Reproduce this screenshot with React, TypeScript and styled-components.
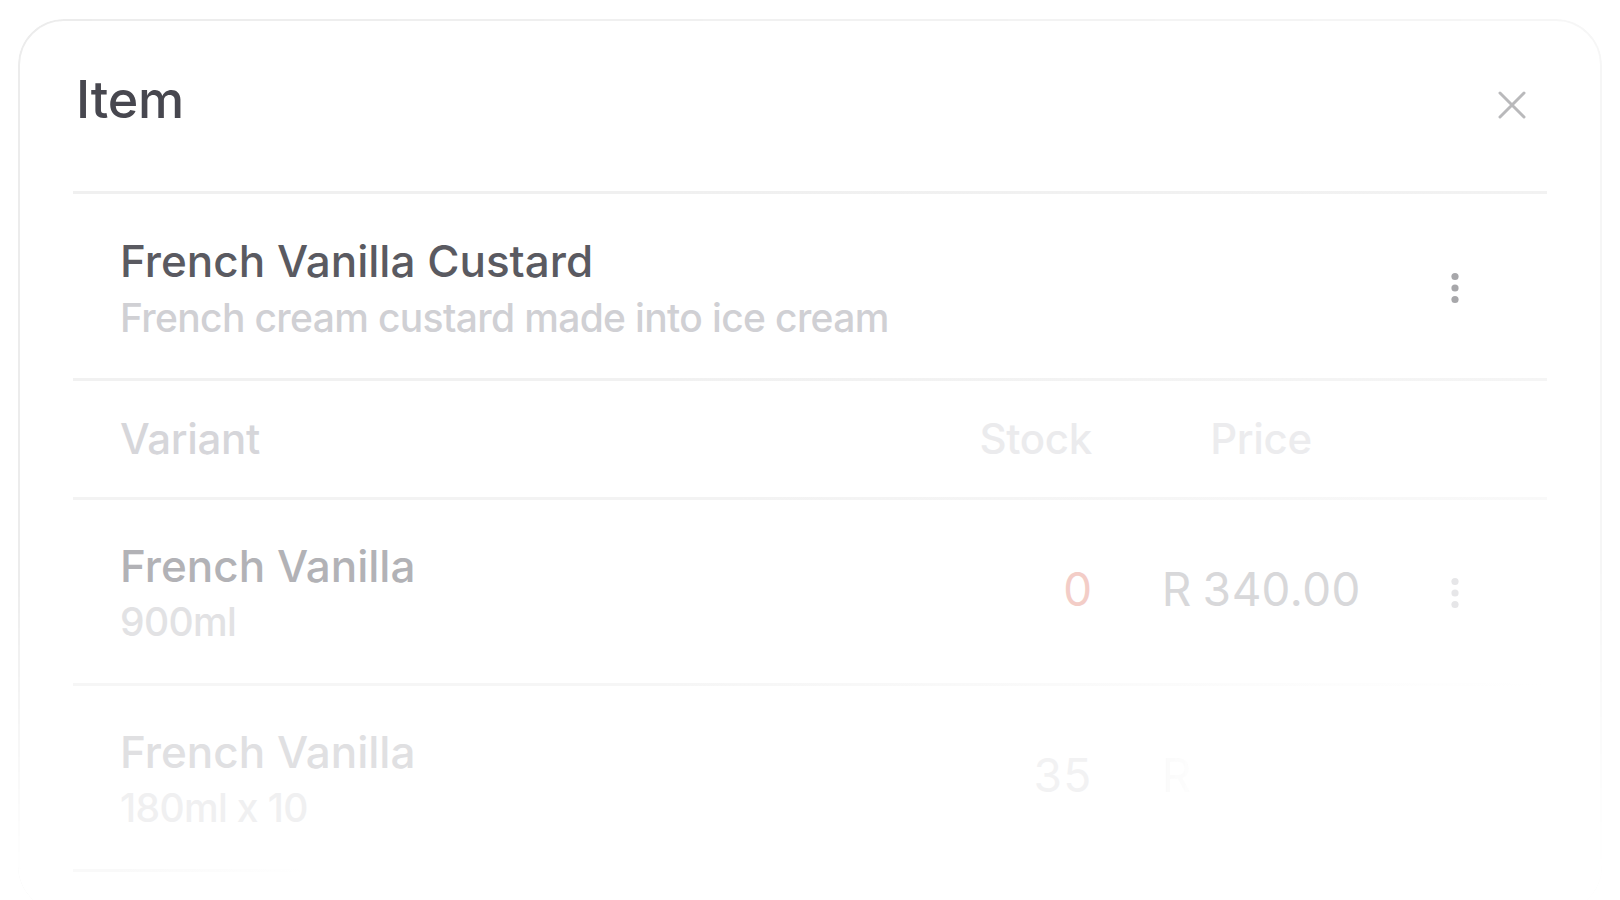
import React from "react";
import styled, { createGlobalStyle } from "styled-components";

const GlobalStyle = createGlobalStyle`
  html, body {
    margin: 0;
    height: 100%;
    overflow: hidden;
    background: #ffffff;
  }
  body {
    font-family: Inter, "Noto Sans", "Liberation Sans", sans-serif;
  }
  * { box-sizing: border-box; }
`;

const Page = styled.div`
  padding: 19px 18px 0 18px;
`;

const Card = styled.section`
  position: relative;
  padding: 55px 55px 0;
  border-radius: 46px;
  background: #ffffff;

  &::before {
    content: "";
    position: absolute;
    inset: 0;
    border: 2px solid #ececec;
    border-radius: inherit;
    pointer-events: none;
    -webkit-mask-image: linear-gradient(to bottom, #000 0%, #000 62%, transparent 96%),
      linear-gradient(to right, #000 0%, rgba(0, 0, 0, 0.45) 100%);
    -webkit-mask-composite: source-in;
    mask-image: linear-gradient(to bottom, #000 0%, #000 62%, transparent 96%),
      linear-gradient(to right, #000 0%, rgba(0, 0, 0, 0.45) 100%);
    mask-composite: intersect;
  }
`;

const Header = styled.header`
  display: flex;
  justify-content: space-between;
  align-items: flex-start;
  padding: 0 0 65px 3px;
`;

const Heading = styled.h1`
  margin: 0;
  font-size: 52px;
  line-height: 1;
  font-weight: 500;
  color: #47474f;
  letter-spacing: -0.2px;
`;

const CloseButton = styled.button`
  margin: 17px 21px 0 0;
  padding: 0;
  width: 28px;
  height: 28px;
  border: 0;
  background: transparent;
  display: flex;
  align-items: center;
  justify-content: center;
  cursor: pointer;
`;

const Rule = styled.div<{ $from: string; $to: string; $stop?: string; $end?: string }>`
  height: 3px;
  background: linear-gradient(
    to right,
    ${(p) => p.$from} 0%,
    ${(p) => p.$from} ${(p) => p.$stop ?? "40%"},
    ${(p) => p.$to} ${(p) => p.$end ?? "100%"}
  );
`;

const ProductRow = styled.div`
  display: flex;
  align-items: center;
  padding: 45px 67px 41px 47px;
`;

const ProductText = styled.div`
  flex: 1;
  display: flex;
  flex-direction: column;
`;

const Title = styled.div<{ $color: string; $size?: number }>`
  font-size: ${(p) => p.$size ?? 44}px;
  line-height: 1;
  font-weight: 500;
  color: ${(p) => p.$color};
`;

const Sub = styled.div<{ $color: string; $gap?: number }>`
  margin-top: ${(p) => p.$gap ?? 15}px;
  font-size: 39px;
  line-height: 1;
  font-weight: 500;
  letter-spacing: -0.65px;
  color: ${(p) => p.$color};
`;

const KebabBox = styled.div`
  width: 50px;
  display: flex;
  justify-content: center;
  align-items: center;
`;

const GridRow = styled.div<{ $pt: number; $pb: number }>`
  display: grid;
  grid-template-columns: 1fr 140px 338px 50px;
  align-items: center;
  padding: ${(p) => p.$pt}px 67px ${(p) => p.$pb}px 47px;
`;

const HeadCell = styled.div<{ $color: string; $align?: string }>`
  font-size: 42px;
  line-height: 1;
  font-weight: 500;
  letter-spacing: -0.3px;
  color: ${(p) => p.$color};
  text-align: ${(p) => p.$align ?? "left"};
`;

const Cell = styled.div<{ $align?: string }>`
  text-align: ${(p) => p.$align ?? "left"};
`;

const NumberText = styled.span<{ $color: string }>`
  display: block;
  margin-bottom: 7px;
  font-size: 46px;
  line-height: 1;
  font-weight: 400;
  letter-spacing: -0.6px;
  color: ${(p) => p.$color};
  font-variant-numeric: tabular-nums;
`;

const FadingPrice = styled(NumberText)`
  -webkit-mask-image: linear-gradient(to right, #000 0%, rgba(0, 0, 0, 0.5) 22%, transparent 34%);
  mask-image: linear-gradient(to right, #000 0%, rgba(0, 0, 0, 0.5) 22%, transparent 34%);
`;

const Tail = styled.div`
  height: 40px;
`;

const CloseIcon = () => (
  <svg width="28" height="28" viewBox="0 0 28 28" fill="none">
    <path d="M2 2 L26 26 M26 2 L2 26" stroke="#b9b9bb" strokeWidth="3" strokeLinecap="round" />
  </svg>
);

const Kebab = ({ color }: { color: string }) => (
  <svg width="8" height="32" viewBox="0 0 8 32">
    <circle cx="4" cy="4.5" r="3.6" fill={color} />
    <circle cx="4" cy="16" r="3.6" fill={color} />
    <circle cx="4" cy="27.5" r="3.6" fill={color} />
  </svg>
);

type Variant = {
  name: string;
  size: string;
  stock: string;
  price: string;
  nameColor: string;
  sizeColor: string;
  stockColor: string;
  priceColor: string;
  kebabColor: string;
  fade?: boolean;
};

const variants: Variant[] = [
  {
    name: "French Vanilla",
    size: "900ml",
    stock: "0",
    price: "R 340.00",
    nameColor: "#b2b2b6",
    sizeColor: "#e2e2e4",
    stockColor: "#f3cdc7",
    priceColor: "#d8d8da",
    kebabColor: "#e6e6e8",
  },
  {
    name: "French Vanilla",
    size: "180ml x 10",
    stock: "35",
    price: "R 450.00",
    nameColor: "#e0e0e2",
    sizeColor: "#f0f0f1",
    stockColor: "#f2f2f3",
    priceColor: "#f6f6f6",
    kebabColor: "#ffffff",
    fade: true,
  },
];

const rules = [
  { from: "#f3f3f3", to: "#f9f9f9", stop: "45%" },
  { from: "#f6f6f6", to: "#ffffff", stop: "40%" },
];

export default function App() {
  return (
    <>
      <GlobalStyle />
      <Page>
        <Card>
          <Header>
            <Heading>Item</Heading>
            <CloseButton aria-label="Close">
              <CloseIcon />
            </CloseButton>
          </Header>
          <Rule $from="#f0f0f0" $to="#f2f2f2" />
          <ProductRow>
            <ProductText>
              <Title $color="#5a5a61" $size={44}>
                French Vanilla Custard
              </Title>
              <Sub $color="#d0d0d4">French cream custard made into ice cream</Sub>
            </ProductText>
            <KebabBox>
              <Kebab color="#a7a7aa" />
            </KebabBox>
          </ProductRow>
          <Rule $from="#f1f1f1" $to="#f5f5f5" />
          <GridRow $pt={37} $pb={37}>
            <HeadCell $color="#d6d6da">Variant</HeadCell>
            <HeadCell $color="#ebebed" $align="right">
              Stock
            </HeadCell>
            <HeadCell $color="#ececee" $align="center">
              Price
            </HeadCell>
            <div />
          </GridRow>
          {variants.map((v, i) => (
            <React.Fragment key={i}>
              <Rule $from={rules[i].from} $to={rules[i].to} $stop={rules[i].stop} />
              <GridRow $pt={44} $pb={42}>
                <Cell>
                  <Title $color={v.nameColor}>{v.name}</Title>
                  <Sub $color={v.sizeColor} $gap={14}>
                    {v.size}
                  </Sub>
                </Cell>
                <Cell $align="right">
                  <NumberText $color={v.stockColor}>{v.stock}</NumberText>
                </Cell>
                <Cell $align="center">
                  {v.fade ? (
                    <FadingPrice $color={v.priceColor}>{v.price}</FadingPrice>
                  ) : (
                    <NumberText $color={v.priceColor}>{v.price}</NumberText>
                  )}
                </Cell>
                <KebabBox>
                  <Kebab color={v.kebabColor} />
                </KebabBox>
              </GridRow>
            </React.Fragment>
          ))}
          <Rule $from="#f9f9f9" $to="#ffffff" $stop="3%" $end="16%" />
          <Tail />
        </Card>
      </Page>
    </>
  );
}
